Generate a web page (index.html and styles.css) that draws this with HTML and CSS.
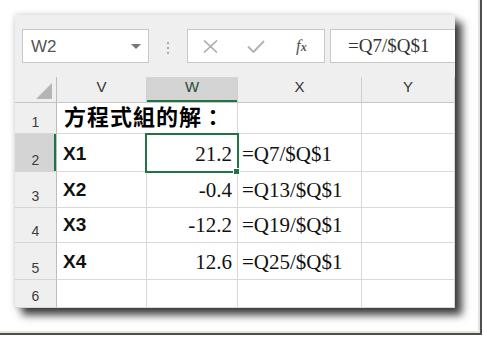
FILE: index.html
```html
<!DOCTYPE html>
<html lang="zh-Hant">
<head>
    <meta charset="UTF-8">
    <meta name="viewport" content="width=device-width, initial-scale=1.0">
    <title>方程式組的解</title>
    <link rel="stylesheet" href="styles.css">
</head>
<body>
    <div class="frame">
        <div class="window">
            <div class="toolbar">
                <div class="namebox">
                    <span>W2</span>
                    <span class="caret"></span>
                </div>
                <div class="grip"><i></i><i></i><i></i></div>
                <div class="fx-buttons">
                    <span class="btn">
                        <svg width="15" height="13" viewBox="0 0 15 13"><path d="M1 0.5 L14 12.5 M14 0.5 L1 12.5" stroke="#ababab" stroke-width="1.6" fill="none"/></svg>
                    </span>
                    <span class="btn">
                        <svg width="18" height="13" viewBox="0 0 18 13"><path d="M1 6.5 L6.5 12 L17 1" stroke="#b4b4b4" stroke-width="2" fill="none"/></svg>
                    </span>
                    <span class="btn fx">f<small>x</small></span>
                </div>
                <div class="formula">=Q7/$Q$1</div>
            </div>

            <div class="sheet">
                <!-- header row -->
                <div class="corner"><span class="tri"></span></div>
                <div class="col-head">V</div>
                <div class="col-head sel">W</div>
                <div class="col-head">X</div>
                <div class="col-head">Y</div>

                <div class="row-head">1</div>
                <div class="cell title">方程式組的解：</div>
                <div class="cell"></div>
                <div class="cell"></div>

                <div class="row-head sel">2</div>
                <div class="cell label">X1</div>
                <div class="cell num active">21.2<span class="handle"></span></div>
                <div class="cell formula-text">=Q7/$Q$1</div>
                <div class="cell"></div>

                <div class="row-head">3</div>
                <div class="cell label">X2</div>
                <div class="cell num">-0.4</div>
                <div class="cell formula-text">=Q13/$Q$1</div>
                <div class="cell"></div>

                <div class="row-head">4</div>
                <div class="cell label">X3</div>
                <div class="cell num">-12.2</div>
                <div class="cell formula-text">=Q19/$Q$1</div>
                <div class="cell"></div>

                <div class="row-head">5</div>
                <div class="cell label">X4</div>
                <div class="cell num">12.6</div>
                <div class="cell formula-text">=Q25/$Q$1</div>
                <div class="cell"></div>

                <div class="row-head">6</div>
                <div class="cell"></div>
                <div class="cell"></div>
                <div class="cell"></div>
                <div class="cell"></div>
            </div>
        </div>
    </div>
</body>
</html>
```

FILE: styles.css
```css
body {
    margin: 0;
    background: #fff;
    overflow: hidden;
    font-family: 'Liberation Sans', Arial, sans-serif;
}

.frame {
    width: 482px;
    height: 335px;
    box-sizing: border-box;
    padding: 15px 0 0 15px;
    border-right: 2px solid #4d5049;
    border-bottom: 2px solid #4d5049;
    box-shadow: inset -2px -2px 0 #e4e4de;
}

.window {
    width: 440px;
    height: 293px;
    background: #efefef;
    box-shadow: 7px 7px 8px rgba(0, 0, 0, 0.75), 0 0 6px rgba(0, 0, 0, 0.2);
    overflow: hidden;
}

/* formula bar */
.toolbar {
    height: 62px;
    box-sizing: border-box;
    padding: 14px 0 0 7px;
    display: flex;
    align-items: flex-start;
}

.namebox {
    width: 127px;
    height: 34px;
    box-sizing: border-box;
    background: #fff;
    border: 1px solid #c8c8c8;
    display: flex;
    align-items: center;
    justify-content: space-between;
    padding: 2px 7px 0 8px;
    font-size: 17px;
    color: #555;
}

.caret {
    width: 0;
    height: 0;
    border-left: 5px solid transparent;
    border-right: 5px solid transparent;
    border-top: 5px solid #777;
    margin-top: -2px;
}

.grip {
    width: 2px;
    margin: 13px 18px 0 18px;
    display: flex;
    flex-direction: column;
    gap: 3px;
}

.grip i {
    width: 2px;
    height: 2px;
    background: #a9a9a9;
}

.fx-buttons {
    width: 138px;
    height: 34px;
    box-sizing: border-box;
    background: #fff;
    border: 1px solid #c8c8c8;
    display: flex;
    justify-content: space-around;
    align-items: center;
}

.btn {
    width: 20px;
    display: flex;
    justify-content: center;
}

.fx {
    font-family: 'Liberation Serif', serif;
    font-style: italic;
    font-size: 17px;
    color: #555;
    align-items: baseline;
}

.fx small {
    font-size: 12px;
    font-weight: bold;
}

.formula {
    flex: 1;
    height: 34px;
    box-sizing: border-box;
    margin-left: 5px;
    background: #fff;
    border: 1px solid #c8c8c8;
    border-right: none;
    padding: 5px 0 0 17px;
    font-family: 'Liberation Serif', serif;
    font-size: 19px;
    color: #333;
}

/* grid */
.sheet {
    display: grid;
    grid-template-columns: 42px 90px 91px 124px 93px;
    grid-template-rows: 26px 31px 38px 36px 35px 37px 28px;
    background: #fff;
}

.corner {
    position: relative;
    background: #efefef;
    border-right: 1px solid #bdbdbd;
    border-bottom: 1px solid #c6c6c6;
}

.corner .tri {
    position: absolute;
    right: 4px;
    bottom: 3px;
    width: 0;
    height: 0;
    border-left: 16px solid transparent;
    border-bottom: 16px solid #b5b5b5;
}

.col-head {
    background: #efefef;
    border-right: 1px solid #cfcfcf;
    border-bottom: 1px solid #c6c6c6;
    display: flex;
    justify-content: center;
    align-items: flex-end;
    padding-bottom: 7px;
    box-sizing: border-box;
    font-size: 15px;
    line-height: 16px;
    color: #333;
}

.col-head.sel {
    background: #d4d4d4;
    box-shadow: inset 0 -2px 0 #217346;
    color: #2a4a33;
}

.row-head {
    background: #efefef;
    border-right: 1px solid #bdbdbd;
    border-bottom: 1px solid #d6d6d6;
    display: flex;
    justify-content: center;
    align-items: flex-end;
    padding-bottom: 3px;
    box-sizing: border-box;
    font-size: 14px;
    line-height: 16px;
    color: #3c3c3c;
}

.row-head.sel {
    background: #d4d4d4;
    box-shadow: inset -2px 0 0 #217346;
}

.cell {
    border-right: 1px solid #d9d9d9;
    border-bottom: 1px solid #d9d9d9;
    box-sizing: border-box;
    display: flex;
    align-items: flex-end;
    padding-bottom: 7px;
    line-height: 20px;
    color: #111;
    white-space: nowrap;
}

.title {
    grid-column: span 2;
    align-items: center;
    padding: 0 0 1px 7px;
    font-family: 'Liberation Sans', 'Noto Sans CJK TC', sans-serif;
    font-weight: bold;
    font-size: 22px;
    letter-spacing: 1px;
    color: #000;
}

.label {
    padding-left: 6px;
    font-weight: bold;
    font-size: 19px;
}

.num {
    justify-content: flex-end;
    padding-right: 5px;
    font-family: 'Liberation Serif', serif;
    font-size: 21px;
}

.formula-text {
    padding-left: 4px;
    font-family: 'Liberation Serif', serif;
    font-size: 21px;
}

.active {
    position: relative;
}

.active::before {
    content: '';
    position: absolute;
    top: -1px;
    left: -2px;
    right: -2px;
    bottom: -2px;
    border: 2px solid #217346;
    z-index: 1;
}

.handle {
    position: absolute;
    right: -3px;
    bottom: -4px;
    width: 5px;
    height: 5px;
    background: #217346;
    border: 1px solid #fff;
    z-index: 2;
}
```
